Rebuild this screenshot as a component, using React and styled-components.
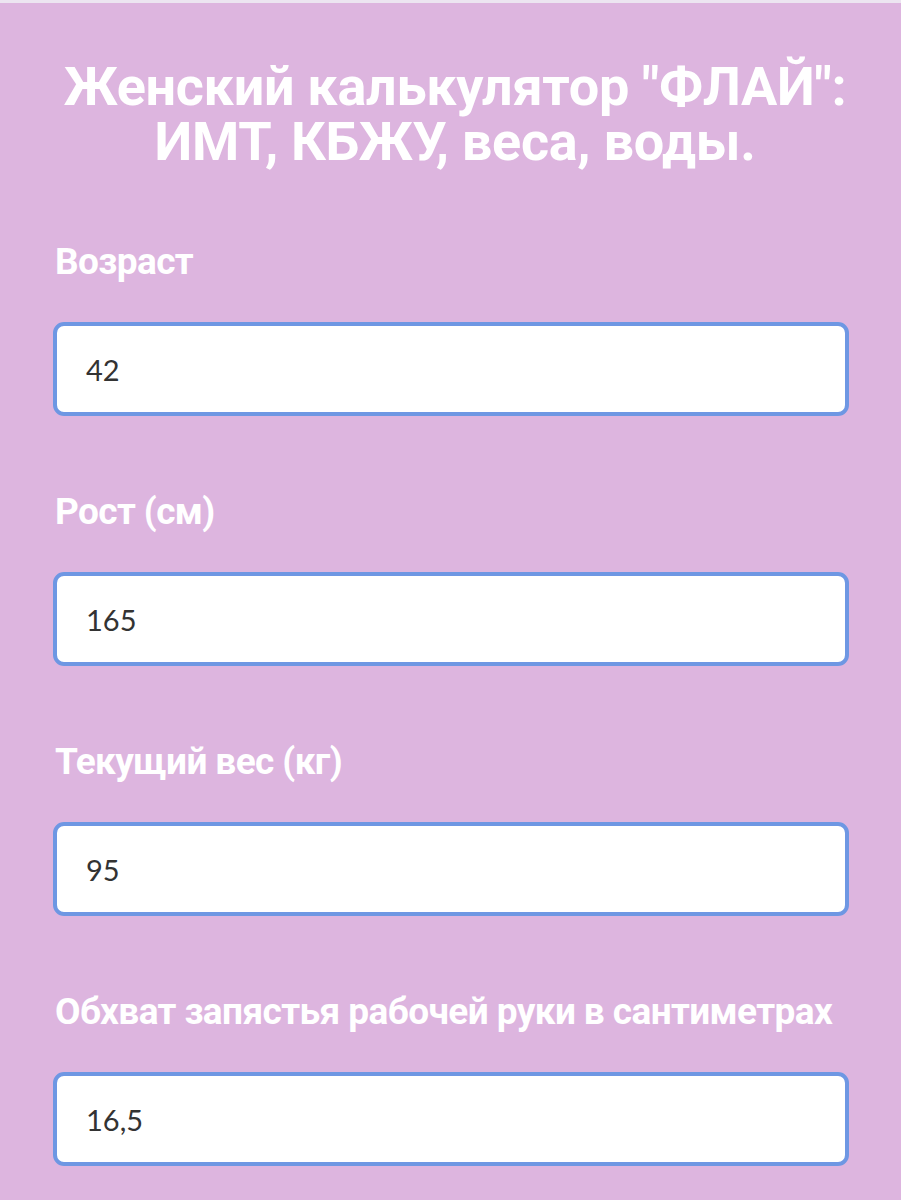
import React from "react";
import styled, { createGlobalStyle } from "styled-components";

const Global = createGlobalStyle`
  html, body { margin: 0; padding: 0; background: #ddb5df; }
  * { box-sizing: border-box; }
`;

const Screen = styled.div`
  min-height: 1200px;
  background: #ddb5df;
  border-top: 3px solid #ece5f1;
`;

const Content = styled.div`
  padding: 56px 52px 0 53px;
  display: flex;
  flex-direction: column;
`;

const Title = styled.h1`
  margin: 0 0 71px;
  text-align: center;
  color: #ffffff;
  font-family: Roboto, "Open Sans", sans-serif;
  font-weight: 700;
  font-size: 54px;
  line-height: 55px;
  letter-spacing: -0.3px;
  padding-left: 8px;
`;

const Field = styled.div`
  display: flex;
  flex-direction: column;
  gap: 38px;
  margin-bottom: 74px;
`;

const Label = styled.label`
  color: #ffffff;
  font-family: Roboto, "Open Sans", sans-serif;
  font-weight: 700;
  font-size: 37px;
  line-height: 44px;
  padding-left: 2px;
  letter-spacing: -0.6px;
`;

const Input = styled.div`
  height: 94px;
  background: #ffffff;
  border: 4px solid #6e97e3;
  border-radius: 11px;
  display: flex;
  align-items: center;
  padding-left: 29px;
  font-family: Lato, "Open Sans", sans-serif;
  font-size: 29px;
  color: #333333;
`;

const fields = [
  { label: "Возраст", value: "42" },
  { label: "Рост (см)", value: "165" },
  { label: "Текущий вес (кг)", value: "95" },
  { label: "Обхват запястья рабочей руки в сантиметрах", value: "16,5" },
];

export default function App() {
  return (
    <>
      <Global />
      <Screen>
        <Content>
          <Title>
            Женский калькулятор "ФЛАЙ":
            <br />
            ИМТ, КБЖУ, веса, воды.
          </Title>
          {fields.map((f) => (
            <Field key={f.label}>
              <Label>{f.label}</Label>
              <Input>{f.value}</Input>
            </Field>
          ))}
        </Content>
      </Screen>
    </>
  );
}
